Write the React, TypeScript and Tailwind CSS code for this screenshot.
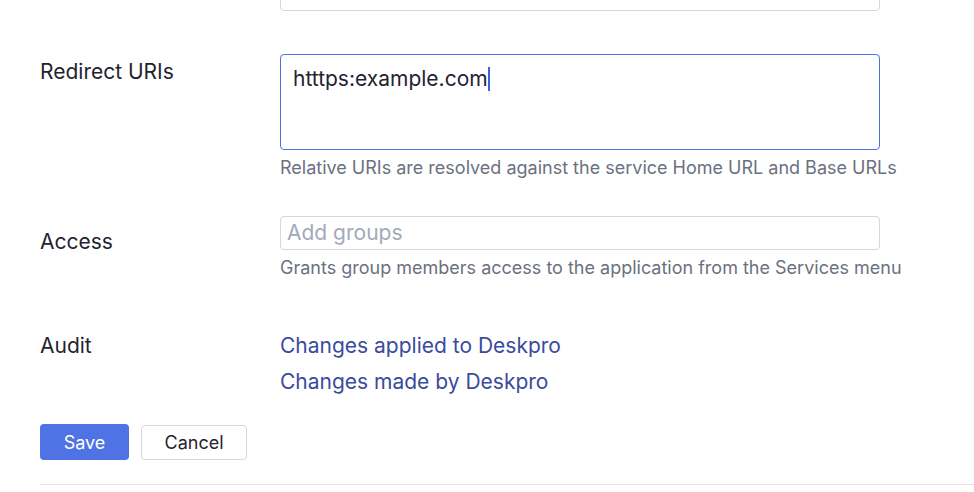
const font = { fontFamily: 'Inter, "Noto Sans", sans-serif' }

const App = () => {
  return (
    <div className="min-h-screen bg-white px-10" style={font}>
      {/* tail of the field above */}
      <div className="ml-[240px] -mt-[31px] h-[42px] w-[600px] rounded border border-[#d4d7de]" />

      {/* Redirect URIs */}
      <div className="mt-[43px] flex">
        <div className="w-[240px] pt-[5px] text-[21px] leading-[26px] text-[#1f2430]">Redirect URIs</div>
        <div className="w-[600px]">
          <div className="h-[96px] rounded border border-[#4d74e6] px-3 pt-[7px] text-[21px] leading-[24px] text-[#1f2430]">
            htttps:example.com<span className="inline-block h-[24px] w-[2px] translate-y-[5px] bg-[#3b63d9]" />
          </div>
          <p className="mt-[6px] whitespace-nowrap text-[18px] leading-[24px] text-[#6b7180]">
            Relative URIs are resolved against the service Home URL and Base URLs
          </p>
        </div>
      </div>

      {/* Access */}
      <div className="mt-[36px] flex">
        <div className="w-[240px] pt-[13px] text-[21px] leading-[26px] text-[#1f2430]">Access</div>
        <div className="w-[600px]">
          <div className="flex h-[34px] items-center rounded border border-[#d4d7de] px-[6px] text-[21px] text-[#a3a9b8]">
            Add groups
          </div>
          <p className="mt-[6px] whitespace-nowrap text-[18px] leading-[24px] text-[#6b7180]">
            Grants group members access to the application from the Services menu
          </p>
        </div>
      </div>

      {/* Audit */}
      <div className="mt-[48px] flex">
        <div className="w-[240px] text-[21px] leading-[36px] text-[#1f2430]">Audit</div>
        <div className="flex flex-col text-[21px] leading-[36px] text-[#3a4b9c]">
          <a href="#">Changes applied to Deskpro</a>
          <a href="#">Changes made by Deskpro</a>
        </div>
      </div>

      <div className="mt-[24px] flex items-center gap-3">
        <button className="h-[36px] w-[89px] rounded bg-[#4f73e4] text-[18px] text-white">Save</button>
        <button className="h-[35px] w-[106px] rounded border border-[#d4d7de] bg-white text-[18px] text-[#1f2430]">
          Cancel
        </button>
      </div>

      <div className="-mr-10 mt-[24px] border-t border-[#e3e5ea]" />
    </div>
  )
}

export default App
